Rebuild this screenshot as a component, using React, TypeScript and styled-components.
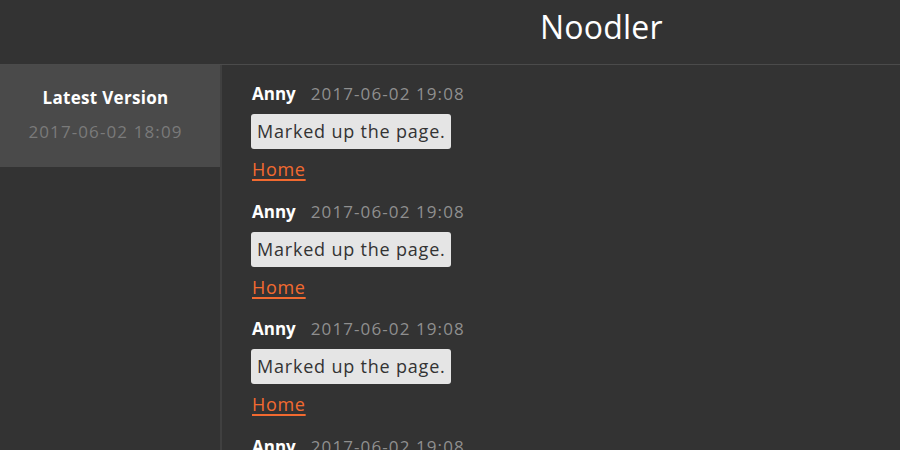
import React from "react";
import styled, { createGlobalStyle } from "styled-components";

const Global = createGlobalStyle`
  html, body { margin: 0; padding: 0; background: #333333; overflow: hidden; }
  body { font-family: "Open Sans", "Noto Sans", "Liberation Sans", sans-serif; }
`;

const Page = styled.div`
  width: 900px;
  height: 450px;
  display: flex;
  flex-direction: column;
  background: #333333;
`;

const Header = styled.header`
  height: 65px;
  flex: none;
  box-sizing: border-box;
  border-bottom: 1px solid #4b4b4b;
  display: flex;
  align-items: center;
  padding-left: 540px;
`;

const Title = styled.h1`
  margin: 0;
  font-size: 32px;
  font-weight: 400;
  color: #ffffff;
  line-height: 1;
  margin-top: -10px;
  letter-spacing: 0.2px;
`;

const Body = styled.div`
  flex: 1;
  display: flex;
  min-height: 0;
`;

const Sidebar = styled.aside`
  width: 222px;
  flex: none;
  box-sizing: border-box;
  border-right: 2px solid #404040;
`;

const VersionItem = styled.div<{ $active?: boolean }>`
  height: 102px;
  background: ${(p) => (p.$active ? "#4a4a4a" : "transparent")};
  display: flex;
  flex-direction: column;
  align-items: center;
  padding: 21px 9px 0 0;
  box-sizing: border-box;
`;

const VersionName = styled.div`
  font-size: 17px;
  font-weight: 700;
  color: #ffffff;
  line-height: 24px;
  letter-spacing: 0.3px;
`;

const VersionDate = styled.div`
  font-size: 17px;
  color: #7a7a7a;
  line-height: 24px;
  margin-top: 10px;
  letter-spacing: 1.1px;
`;

const Feed = styled.main`
  flex: 1;
  padding: 17px 0 0 30px;
  overflow: hidden;
`;

const Comment = styled.div`
  display: flex;
  flex-direction: column;
  align-items: flex-start;
  height: 117.5px;
`;

const Meta = styled.div`
  display: flex;
  align-items: baseline;
  gap: 15px;
  line-height: 24px;
`;

const Author = styled.span`
  font-size: 17px;
  font-weight: 700;
  color: #ffffff;
`;

const Stamp = styled.span`
  font-size: 17px;
  color: #8f8f8f;
  letter-spacing: 1.1px;
`;

const Bubble = styled.div`
  margin-top: 8px;
  margin-left: -1px;
  background: #e5e5e5;
  color: #333333;
  font-size: 18px;
  line-height: 35px;
  padding: 0 5px 0 6px;
  border-radius: 3px;
  letter-spacing: 0.8px;
`;

const Link = styled.a`
  margin-top: 8px;
  color: #f26a30;
  font-size: 18px;
  line-height: 24px;
  text-decoration: underline;
  text-decoration-thickness: 2px;
  text-underline-offset: 3px;
  letter-spacing: 0.7px;
`;

const comments = [0, 1, 2, 3].map((i) => ({
  id: i,
  author: "Anny",
  time: "2017-06-02 19:08",
  text: "Marked up the page.",
  page: "Home",
}));

export default function App() {
  return (
    <>
      <Global />
      <Page>
        <Header>
          <Title>Noodler</Title>
        </Header>
        <Body>
          <Sidebar>
            <VersionItem $active>
              <VersionName>Latest Version</VersionName>
              <VersionDate>2017-06-02 18:09</VersionDate>
            </VersionItem>
          </Sidebar>
          <Feed>
            {comments.map((c) => (
              <Comment key={c.id}>
                <Meta>
                  <Author>{c.author}</Author>
                  <Stamp>{c.time}</Stamp>
                </Meta>
                <Bubble>{c.text}</Bubble>
                <Link href="#">{c.page}</Link>
              </Comment>
            ))}
          </Feed>
        </Body>
      </Page>
    </>
  );
}
